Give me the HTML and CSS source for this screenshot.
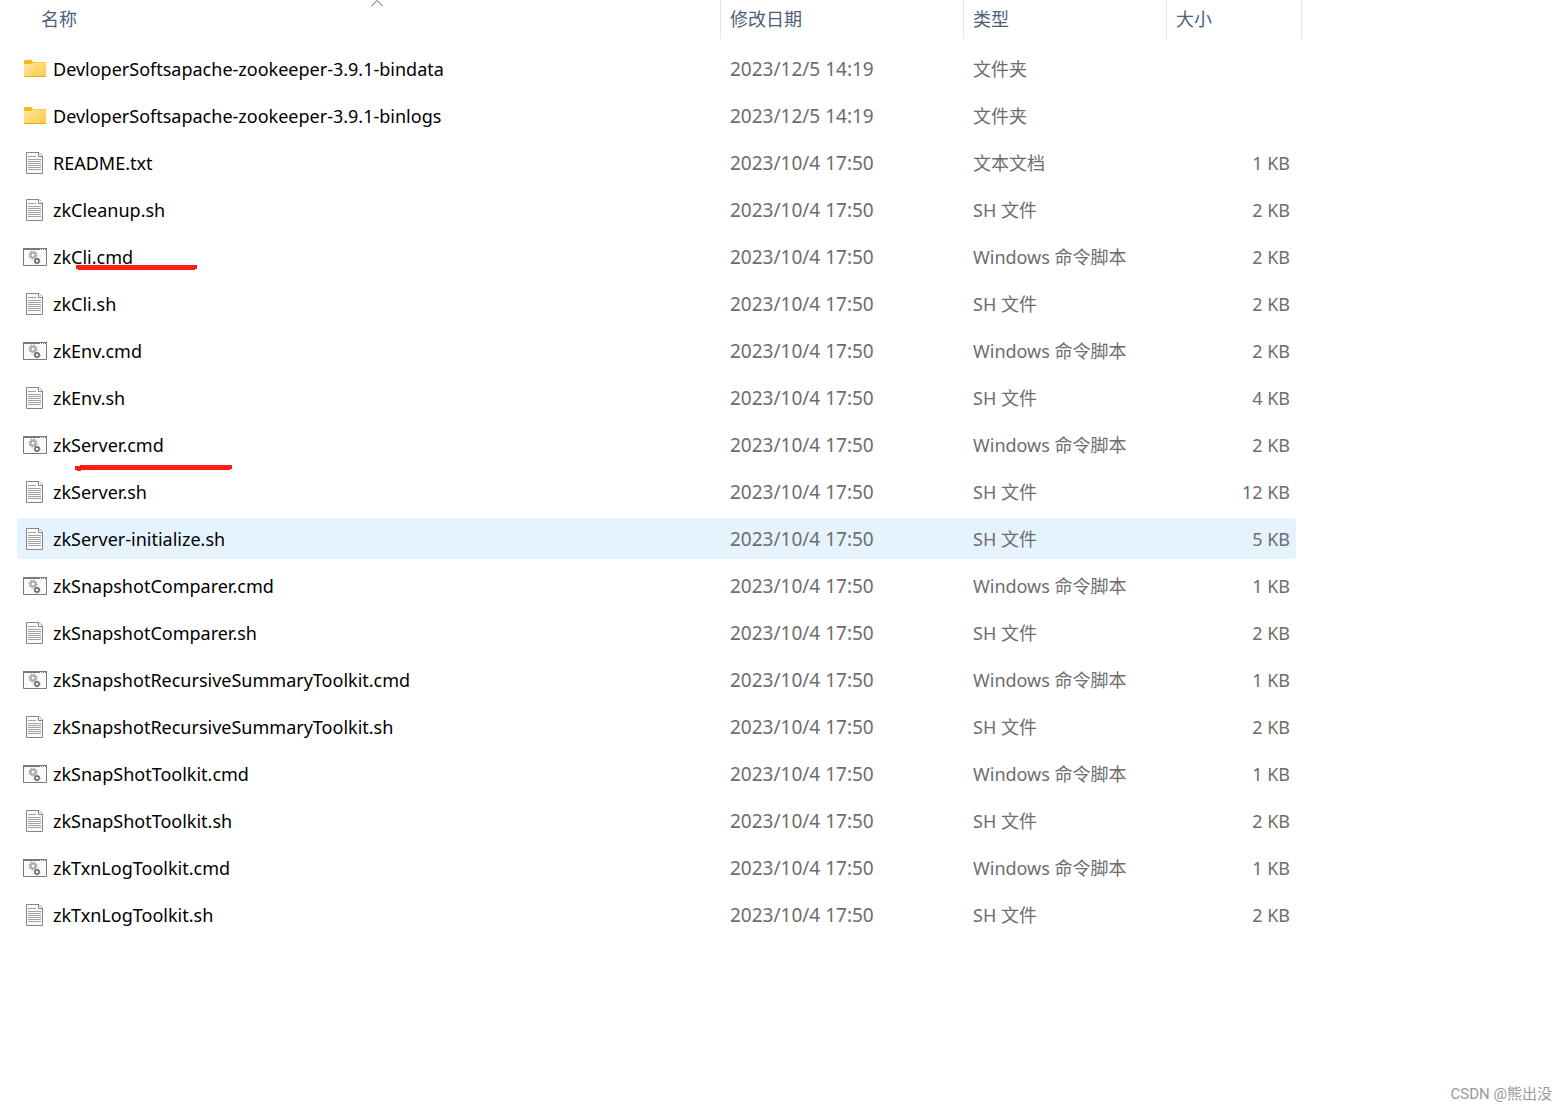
FILE: index.html
```html
<!DOCTYPE html>
<html lang="zh-CN">
<head>
<meta charset="utf-8">
<meta name="viewport" content="width=device-width, initial-scale=1">
<title>bin</title>
<link rel="stylesheet" href="styles.css">
</head>
<body>
<svg class="symbols" aria-hidden="true">
  <linearGradient id="folder-face" x1="0" y1="0" x2="1" y2="1">
    <stop offset="0" stop-color="#ffe7a2"/><stop offset="1" stop-color="#ffcb3d"/>
  </linearGradient>
  <symbol id="folder" viewBox="0 0 24 24">
    <path d="M1 4q0-1 1-1h6q.6 0 1 .5L10 5H22.500q.5 0 .5.500V10H1z" fill="#f8b51c"/>
    <path d="M1 7.500q0-.5.500-.5H8l1.500-1.500H22.500q.5 0 .5.500V19q0 1-1 1H2q-1 0-1-1z" fill="url(#folder-face)"/>
    <path d="M1 19q0 1 1 1h20q1 0 1-1z" fill="#e8ab24"/>
  </symbol>
  <symbol id="doc" viewBox="0 0 24 24">
    <path d="M3.500 1.500H16l3.500 3.500V22.500H3.500z" fill="#fafafa" stroke="#858585"/>
    <path d="M15.500 1.500V5.500H19.500" fill="#fff" stroke="#858585"/>
    <path d="M5 5.500h8M5 8.500h13M5 10.500h13M5 12.500h13M5 14.500h13M5 16.500h13M5 18.500h13" stroke="#a3a3a3"/>
  </symbol>
  <symbol id="script" viewBox="0 0 24 24">
    <path d="M.5 3.500h23v17H.5z" fill="#fafafa" stroke="#777b7b"/>
    <path d="M0 3h24v2H0z" fill="#777b7b"/>
    <path d="M17 4.500h1M19 4.500h1M21 4.500h1" stroke="#fff"/>
    <circle cx="10" cy="10" r="2.500" fill="none" stroke="#a4adb5" stroke-width="2"/>
    <circle cx="10" cy="10" r="3.800" fill="none" stroke="#a4adb5" stroke-width="1.500" stroke-dasharray="1.500 1.485"/>
    <circle cx="14" cy="16" r="2" fill="none" stroke="#646b70" stroke-width="1.500"/>
    <circle cx="14" cy="16" r="2.900" fill="none" stroke="#646b70" stroke-width="1" stroke-dasharray="1.200 1.077"/>
  </symbol>
</svg>
<main class="explorer">
  <table class="files">
    <colgroup><col class="col-name"><col class="col-date"><col class="col-type"><col class="col-size"></colgroup>
    <thead>
      <tr>
        <th aria-sort="ascending"><button class="sort sort-name" type="button">名称<svg class="caret" viewBox="0 0 12 7" aria-hidden="true"><path d="M.5 6 6 .5 11.500 6" fill="none" stroke="#555"/></svg></button></th>
        <th><button class="sort" type="button">修改日期</button></th>
        <th><button class="sort" type="button">类型</button></th>
        <th><button class="sort sort-last" type="button">大小</button></th>
      </tr>
    </thead>
    <tbody>
      <tr><td><div class="name"><svg class="icon"><use href="#folder"/></svg>DevloperSoftsapache-zookeeper-3.9.1-bindata</div></td><td class="date">2023/12/5 14:19</td><td>文件夹</td><td></td></tr>
      <tr><td><div class="name"><svg class="icon"><use href="#folder"/></svg>DevloperSoftsapache-zookeeper-3.9.1-binlogs</div></td><td class="date">2023/12/5 14:19</td><td>文件夹</td><td></td></tr>
      <tr><td><div class="name"><svg class="icon"><use href="#doc"/></svg>README.txt</div></td><td class="date">2023/10/4 17:50</td><td>文本文档</td><td>1 KB</td></tr>
      <tr><td><div class="name"><svg class="icon"><use href="#doc"/></svg>zkCleanup.sh</div></td><td class="date">2023/10/4 17:50</td><td>SH 文件</td><td>2 KB</td></tr>
      <tr><td><div class="name"><svg class="icon"><use href="#script"/></svg>zkCli.cmd<svg class="mark mark-cli" viewBox="0 0 121 5" aria-hidden="true"><path d="M0 0H121V4H119V5H2V4H0z"/></svg></div></td><td class="date">2023/10/4 17:50</td><td>Windows 命令脚本</td><td>2 KB</td></tr>
      <tr><td><div class="name"><svg class="icon"><use href="#doc"/></svg>zkCli.sh</div></td><td class="date">2023/10/4 17:50</td><td>SH 文件</td><td>2 KB</td></tr>
      <tr><td><div class="name"><svg class="icon"><use href="#script"/></svg>zkEnv.cmd</div></td><td class="date">2023/10/4 17:50</td><td>Windows 命令脚本</td><td>2 KB</td></tr>
      <tr><td><div class="name"><svg class="icon"><use href="#doc"/></svg>zkEnv.sh</div></td><td class="date">2023/10/4 17:50</td><td>SH 文件</td><td>4 KB</td></tr>
      <tr><td><div class="name"><svg class="icon"><use href="#script"/></svg>zkServer.cmd<svg class="mark mark-server" viewBox="0 0 157 6" aria-hidden="true"><path d="M0 1H5V0H157V4H155V5H6V6H2V5H0z"/></svg></div></td><td class="date">2023/10/4 17:50</td><td>Windows 命令脚本</td><td>2 KB</td></tr>
      <tr><td><div class="name"><svg class="icon"><use href="#doc"/></svg>zkServer.sh</div></td><td class="date">2023/10/4 17:50</td><td>SH 文件</td><td>12 KB</td></tr>
      <tr class="hovered"><td><div class="name"><svg class="icon"><use href="#doc"/></svg>zkServer-initialize.sh</div></td><td class="date">2023/10/4 17:50</td><td>SH 文件</td><td>5 KB</td></tr>
      <tr><td><div class="name"><svg class="icon"><use href="#script"/></svg>zkSnapshotComparer.cmd</div></td><td class="date">2023/10/4 17:50</td><td>Windows 命令脚本</td><td>1 KB</td></tr>
      <tr><td><div class="name"><svg class="icon"><use href="#doc"/></svg>zkSnapshotComparer.sh</div></td><td class="date">2023/10/4 17:50</td><td>SH 文件</td><td>2 KB</td></tr>
      <tr><td><div class="name"><svg class="icon"><use href="#script"/></svg>zkSnapshotRecursiveSummaryToolkit.cmd</div></td><td class="date">2023/10/4 17:50</td><td>Windows 命令脚本</td><td>1 KB</td></tr>
      <tr><td><div class="name"><svg class="icon"><use href="#doc"/></svg>zkSnapshotRecursiveSummaryToolkit.sh</div></td><td class="date">2023/10/4 17:50</td><td>SH 文件</td><td>2 KB</td></tr>
      <tr><td><div class="name"><svg class="icon"><use href="#script"/></svg>zkSnapShotToolkit.cmd</div></td><td class="date">2023/10/4 17:50</td><td>Windows 命令脚本</td><td>1 KB</td></tr>
      <tr><td><div class="name"><svg class="icon"><use href="#doc"/></svg>zkSnapShotToolkit.sh</div></td><td class="date">2023/10/4 17:50</td><td>SH 文件</td><td>2 KB</td></tr>
      <tr><td><div class="name"><svg class="icon"><use href="#script"/></svg>zkTxnLogToolkit.cmd</div></td><td class="date">2023/10/4 17:50</td><td>Windows 命令脚本</td><td>1 KB</td></tr>
      <tr><td><div class="name"><svg class="icon"><use href="#doc"/></svg>zkTxnLogToolkit.sh</div></td><td class="date">2023/10/4 17:50</td><td>SH 文件</td><td>2 KB</td></tr>
    </tbody>
  </table>
</main>
<footer class="credit">CSDN @熊出没</footer>
</body>
</html>
```
FILE: styles.css
```css
* { box-sizing: border-box; }

body {
  display: flex;
  flex-direction: column;
  min-height: 100vh;
  margin: 0;
  background: #fff;
  color: #6d6d6d;
  font: 18px/24px "Noto Sans", "Noto Sans CJK SC", sans-serif;
}

.symbols {
  position: absolute;
  width: 0;
  height: 0;
}

.explorer { padding: 0 265px 0 17px; }

.files {
  width: 100%;
  min-width: 1100px;
  table-layout: fixed;
  border-spacing: 0;
}

.col-date { width: 243px; }
.col-type { width: 203px; }
.col-size { width: 136px; }

th {
  height: 45px;
  padding: 0;
  vertical-align: top;
}

.sort {
  display: block;
  width: 100%;
  height: 39px;
  padding: 0 9px 3px;
  border: 0 solid #e5e5e5;
  border-left-width: 1px;
  background: none;
  color: #4c607a;
  font: 18px/24px "Noto Sans CJK SC", sans-serif;
  text-align: left;
}

.sort-name {
  position: relative;
  padding-left: 24px;
  border-left-width: 0;
}

.sort-last { border-right-width: 1px; }

.caret {
  position: absolute;
  top: 0;
  left: calc(50% + 2px);
  width: 12px;
  height: 7px;
}

td {
  height: 47px;
  padding: 1px 0 0 10px;
  border: 0 solid transparent;
  border-width: 3px 0;
  background-clip: padding-box;
  white-space: nowrap;
}

td:first-child {
  padding-left: 6px;
  border-radius: 3px 0 0 3px / 6px 0 0 6px;
  color: #000;
}

td:last-child {
  padding-right: 6px;
  border-right-width: 6px;
  border-radius: 0 9px 9px 0 / 0 6px 6px 0;
  text-align: right;
}

.date { font-size: 19px; }

.hovered td { background-color: #e5f3ff; }

.name {
  position: relative;
  display: flex;
  align-items: center;
  gap: 6px;
}

.icon {
  width: 24px;
  height: 24px;
}

/* Hand-drawn red underlines laid over the list */
.mark {
  position: absolute;
  fill: #ff1c10;
}

.mark-cli {
  top: 20px;
  left: 53px;
  width: 121px;
  height: 5px;
}

.mark-server {
  top: 32px;
  left: 52px;
  width: 157px;
  height: 6px;
}

.credit {
  margin-top: auto;
  padding: 0 15px 6px;
  color: #999;
  font: 15px/22px Roboto, "Noto Sans CJK SC", sans-serif;
  text-align: right;
}
```
